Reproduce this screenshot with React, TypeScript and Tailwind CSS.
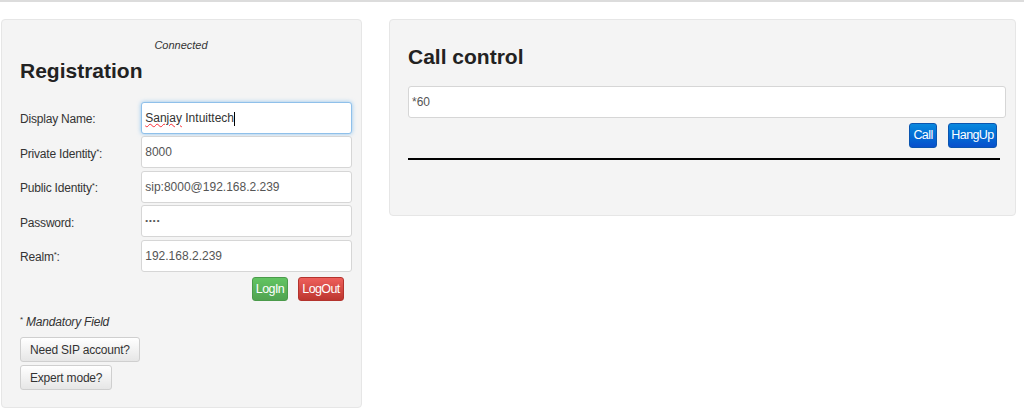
import React from "react";

const font = { fontFamily: '"Liberation Sans", Arial, sans-serif' };

interface Field {
    label: string;
    req?: boolean;
    value: string;
    focus?: boolean;
}

const fields: Field[] = [
    { label: "Display Name:", value: "Sanjay Intuittech", focus: true },
    { label: "Private Identity", req: true, value: "8000" },
    { label: "Public Identity", req: true, value: "sip:8000@192.168.2.239" },
    { label: "Password:", value: "••••" },
    { label: "Realm", req: true, value: "192.168.2.239" },
];

const FormRow: React.FC<{ field: Field }> = ({ field }) => (
    <div className="flex items-center h-[34.5px]">
        <label className="w-[122px] pt-[3px] text-[12px] tracking-[-0.2px] text-[#333]">
            {field.label}
            {field.req && (
                <>
                    <sup className="text-[8px]">*</sup>:
                </>
            )}
        </label>
        <div
            className={`w-[212px] h-[32px] bg-white rounded-[3px] flex items-center px-[3px] text-[12px] text-[#555] ${
                field.focus
                    ? "border border-[#8fc0ea] shadow-[0_0_4px_rgba(82,168,236,0.6)]"
                    : "border border-[#d6d6d6]"
            }`}
        >
            {field.focus ? (
                <span className="text-[#333]">
                    <span className="underline decoration-wavy decoration-red-500 decoration-1">Sanjay</span> Intuittech
                    <span className="inline-block w-px h-[14px] bg-black align-middle" />
                </span>
            ) : (
                <span className={field.label === "Password:" ? "text-[8px] tracking-[1px]" : ""}>{field.value}</span>
            )}
        </div>
    </div>
);

export default function App() {
    return (
        <div className="w-[1024px] h-[418px] bg-white border-t-2 border-[#dcdcdc]" style={font}>
            <div className="flex items-start gap-[27px] pl-[1px] pt-[17px]">
                {/* Registration */}
                <div className="w-[361px] h-[389px] bg-[#f4f4f4] border border-[#e6e6e6] rounded-[4px] pl-[18px] pr-[9px]">
                    <div className="text-center text-[11px] italic text-[#333] pt-[17px] pr-[10px]">Connected</div>
                    <h2 className="text-[21px] font-bold text-[#222] mt-[4px] leading-[26px]">Registration</h2>
                    <div className="mt-[17px] flex flex-col">
                        {fields.map((f) => (
                            <FormRow key={f.label} field={f} />
                        ))}
                    </div>
                    <div className="flex justify-end gap-[10px] mt-[4px] pr-[8px]">
                        <button className="h-[24px] w-[36px] text-[12.5px] tracking-[-0.6px] text-white rounded-[3px] border border-[#4a9a4a] bg-gradient-to-b from-[#62c462] to-[#51a351]">
                            LogIn
                        </button>
                        <button className="h-[24px] w-[46px] text-[12.5px] tracking-[-0.6px] text-white rounded-[3px] border border-[#b3332d] bg-gradient-to-b from-[#ee5f5b] to-[#bd362f]">
                            LogOut
                        </button>
                    </div>
                    <div className="mt-[12px] text-[12px] tracking-[-0.2px] italic text-[#333]">
                        <sup className="text-[8px] not-italic">*</sup> Mandatory Field
                    </div>
                    <div className="mt-[6px] flex flex-col items-start gap-[3px]">
                        <button className="h-[25px] px-[9px] text-[12px] tracking-[-0.2px] text-[#333] rounded-[3px] border border-[#cfcfcf] bg-gradient-to-b from-white to-[#e6e6e6]">
                            Need SIP account?
                        </button>
                        <button className="h-[25px] px-[9px] text-[12px] tracking-[-0.2px] text-[#333] rounded-[3px] border border-[#cfcfcf] bg-gradient-to-b from-white to-[#e6e6e6]">
                            Expert mode?
                        </button>
                    </div>
                </div>

                {/* Call control */}
                <div className="w-[627px] h-[197px] bg-[#f4f4f4] border border-[#e6e6e6] rounded-[4px] pl-[18px] pr-[8px]">
                    <h2 className="text-[21px] font-bold text-[#222] mt-[24px] leading-[26px]">Call control</h2>
                    <div className="mt-[16px] w-[598px] h-[32px] bg-white border border-[#d6d6d6] rounded-[3px] flex items-center px-[3px] text-[12px] text-[#555]">
                        *60
                    </div>
                    <div className="flex justify-end gap-[11px] mt-[5px] pr-[10px]">
                        <button className="h-[25px] w-[28px] text-[12.5px] tracking-[-0.6px] text-white rounded-[3px] border border-[#0a55b0] bg-gradient-to-b from-[#0a88dd] to-[#0a4fcc]">
                            Call
                        </button>
                        <button className="h-[25px] w-[49px] text-[12.5px] tracking-[-0.6px] text-white rounded-[3px] border border-[#0a55b0] bg-gradient-to-b from-[#0a88dd] to-[#0a4fcc]">
                            HangUp
                        </button>
                    </div>
                    <div className="mt-[10px] w-[592px] h-[2px] bg-black" />
                </div>
            </div>
        </div>
    );
}
